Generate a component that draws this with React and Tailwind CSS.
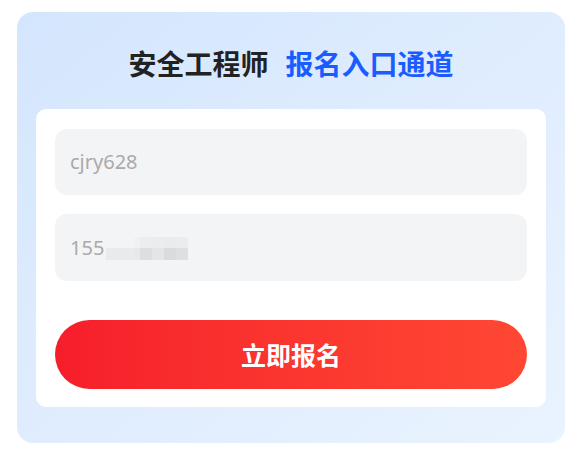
export default function App() {
  const font = { fontFamily: '"Noto Sans CJK SC", "Noto Sans", sans-serif' };
  const latin = { fontFamily: '"Noto Sans", "Noto Sans CJK SC", sans-serif' };
  const top = ["#f3f4f6", "#f0f1f2", "#ecedee", "#ebeced", "#eaebec", "#ebeced"];
  const bot = ["#e9eaeb", "#e7e8e9", "#dddee0", "#e4e5e6", "#dadbdd", "#dedfe0"];
  const widths = [28, 6, 12, 12, 12, 12];
  return (
    <div className="w-[587px] h-[453px] bg-white pt-[12px] pl-[17px]" style={font}>
      <div className="w-[548px] h-[431px] rounded-[16px] bg-gradient-to-br from-[#d4e6fd] to-[#eaf3ff] flex flex-col">
        <div className="pt-[37px] mb-[32px] flex justify-center leading-[28px] text-[28px] font-bold">
          <span className="text-[#222222]">安全工程师</span>
          <span className="text-[#1a5cff] ml-[17px]">报名入口通道</span>
        </div>
        <div className="mx-[19px] rounded-[10px] bg-white px-[19px] pt-[20px] pb-[18px] flex flex-col">
          <div className="h-[66px] rounded-[12px] bg-[#f3f4f6] pl-[15px] flex items-center text-[20px] text-[#aaaaaa]" style={latin}>
            cjry628
          </div>
          <div className="h-[67px] mt-[19px] rounded-[12px] bg-[#f3f4f6] pl-[15px] flex items-center text-[20px] text-[#aaaaaa]" style={latin}>
            <span>155</span>
            <span className="flex flex-col ml-[2px] mt-[1px]">
              <span className="flex h-[11px]">
                {widths.map((w, i) => (
                  <span key={i} style={{ width: w, background: top[i] }} />
                ))}
              </span>
              <span className="flex h-[12px]">
                {widths.map((w, i) => (
                  <span key={i} style={{ width: w, background: bot[i] }} />
                ))}
              </span>
            </span>
          </div>
          <button className="h-[69px] mt-[39px] rounded-full bg-gradient-to-r from-[#f61d2b] to-[#ff4733] text-white text-[25px] font-bold flex items-center justify-center">
            立即报名
          </button>
        </div>
      </div>
    </div>
  );
}
